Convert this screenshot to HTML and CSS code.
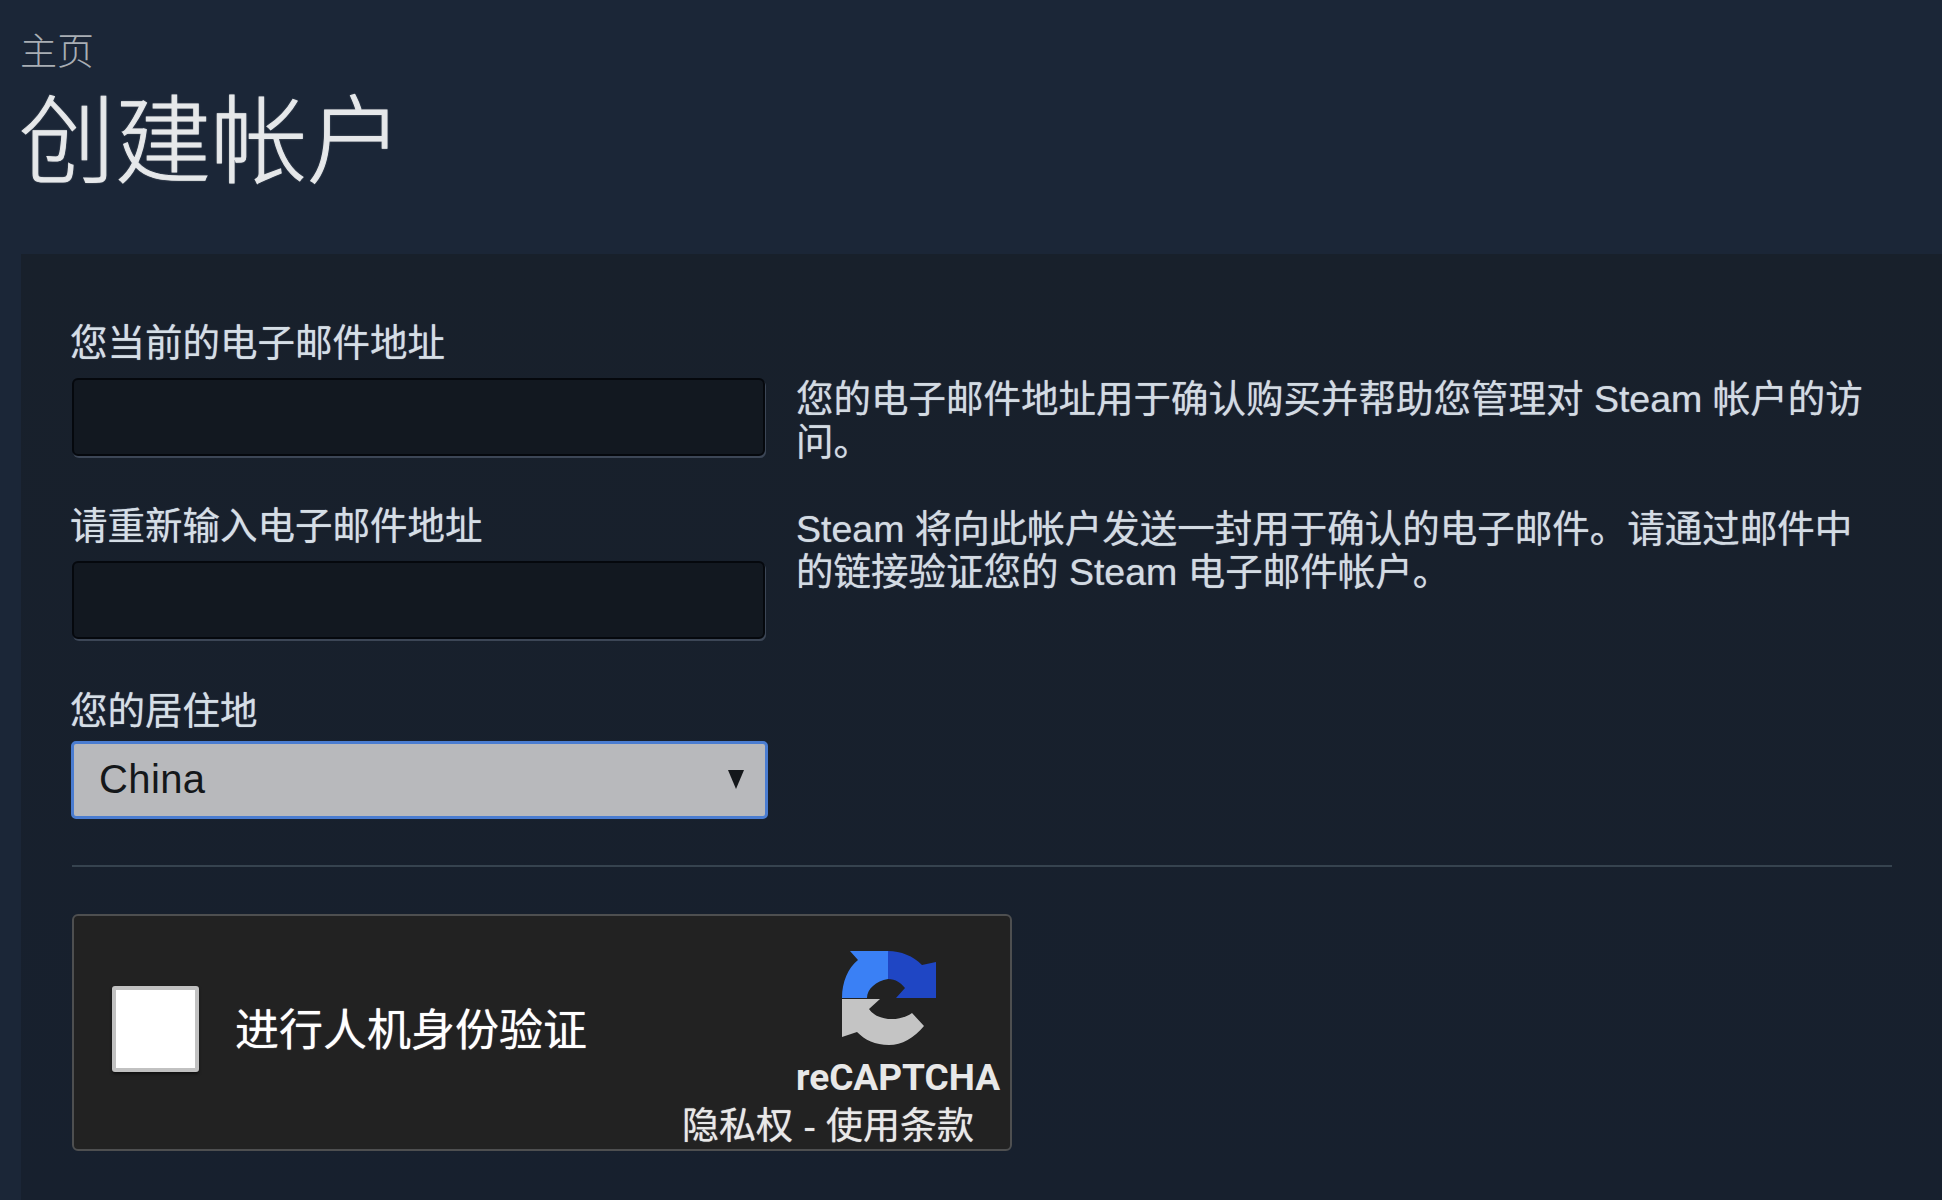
FILE: index.html
```html
<!DOCTYPE html>
<html lang="zh-CN">
<head>
    <meta charset="UTF-8">
    <meta name="viewport" content="width=device-width, initial-scale=1.0">
    <title>创建帐户</title>
    <link rel="stylesheet" href="styles.css">
</head>
<body>
    <div class="page-header">
        <div class="breadcrumb">主页</div>
        <h1>创建帐户</h1>
    </div>
    <div class="panel">
        <div class="form-top">
            <div class="fields">
                <label class="field-label">您当前的电子邮件地址</label>
                <input class="text-input" type="text">
                <label class="field-label">请重新输入电子邮件地址</label>
                <input class="text-input" type="text">
                <label class="field-label">您的居住地</label>
                <div class="select-box">
                    <span>China</span>
                    <span class="select-arrow"></span>
                </div>
            </div>
            <div class="hints">
                <p>您的电子邮件地址用于确认购买并帮助您管理对 Steam 帐户的访问。</p>
                <p>Steam 将向此帐户发送一封用于确认的电子邮件。请通过邮件中的链接验证您的 Steam 电子邮件帐户。</p>
            </div>
        </div>
        <div class="divider"></div>
        <div class="captcha">
            <div class="captcha-check"></div>
            <div class="captcha-label">进行人机身份验证</div>
            <div class="captcha-brand">
                <svg class="captcha-logo" viewBox="0 0 94 94" width="94" height="94">
                    <path fill="#3a80f5" d="M46 0H8L16 9C6 17 0 31 0 47H25C25 38 34 30 46 28Z"/>
                    <path fill="#1f46c4" d="M46 0C59 0 71 5 80 14L94 11V47H54L63 37C59 32 54 28 46 28Z"/>
                    <path fill="#c4c4c4" d="M0 48H38L27 58C34 69 56 72 70 62L82 75C72 87 60 94 47 94C33 94 23 89 15 81L0 86Z"/>
                </svg>
                <div class="captcha-name">reCAPTCHA</div>
                <div class="captcha-links">隐私权 - 使用条款</div>
            </div>
        </div>
    </div>
</body>
</html>
```

FILE: styles.css
```css
body {
    margin: 0;
    height: 1200px;
    overflow: hidden;
    background: #1b2637;
    font-family: "Liberation Sans", "Noto Sans CJK SC", sans-serif;
    color: #c6d4df;
}

.page-header {
    height: 254px;
    padding: 31px 0 0 19px;
    box-sizing: border-box;
}

.breadcrumb {
    padding-left: 1px;
    font-size: 37px;
    line-height: 44px;
    font-weight: 300;
    color: #a9aeb4;
}

h1 {
    margin: 7px 0 0;
    font-size: 96px;
    line-height: 120px;
    font-weight: 300;
    color: #e6e8ea;
    -webkit-text-stroke: 1px #e6e8ea;
    text-shadow: 0 0 2px rgba(230, 232, 234, 0.7);
}

.panel {
    margin-left: 21px;
    height: 946px;
    padding: 67px 50px 0 51px;
    box-sizing: border-box;
    background: linear-gradient(#18202b, #17202e);
}

.form-top {
    display: flex;
    gap: 31px;
}

.fields {
    width: 693px;
    flex-shrink: 0;
}

.field-label {
    display: block;
    margin-left: -2px;
    font-size: 37.5px;
    line-height: 44px;
    color: #d5dee6;
    text-shadow: 0 0 1px rgba(213, 222, 230, 0.7);
}

.text-input {
    display: block;
    width: 100%;
    height: 78px;
    margin: 13px 0 48px;
    box-sizing: border-box;
    background: #121820;
    border: 2px solid #05080d;
    border-radius: 6px;
    box-shadow: 1px 2px 0 #3c4656;
}

.text-input:last-of-type {
    margin-bottom: 50px;
}

.select-box {
    display: flex;
    align-items: center;
    justify-content: space-between;
    width: 697px;
    height: 78px;
    margin: 8px 0 0 -1px;
    padding: 0 21px 2px 25px;
    box-sizing: border-box;
    background: #b8b9bc;
    border: 3px solid #4a7cd0;
    border-radius: 5px;
    font-size: 40px;
    letter-spacing: 0.4px;
    color: #14171a;
}

.select-arrow {
    width: 0;
    height: 0;
    border-left: 8px solid transparent;
    border-right: 8px solid transparent;
    border-top: 19px solid #14171a;
}

.hints {
    flex: 1;
    padding: 57px 20px 0 0;
}

.hints p {
    margin: 0 0 44px;
    font-size: 37.5px;
    line-height: 43px;
    color: #d3dbe3;
    text-shadow: 0 0 1px rgba(211, 219, 227, 0.7);
}

.divider {
    height: 2px;
    margin-top: 46px;
    background: #36434f;
}

.captcha {
    position: relative;
    width: 940px;
    height: 237px;
    margin-top: 47px;
    box-sizing: border-box;
    display: flex;
    align-items: center;
    padding-left: 38px;
    background: #222222;
    border: 2px solid #4e4f50;
    border-radius: 6px;
}

.captcha-check {
    width: 87px;
    height: 86px;
    margin-top: -8px;
    box-sizing: border-box;
    background: #ffffff;
    border: 4px solid #c1c1c1;
    border-radius: 3px;
    box-shadow: 0 2px 3px rgba(0, 0, 0, 0.5);
}

.captcha-label {
    margin-left: 36px;
    margin-top: -12px;
    font-size: 44px;
    color: #ffffff;
    text-shadow: 0 0 1px rgba(255, 255, 255, 0.8);
}

.captcha-brand {
    position: absolute;
    top: 35px;
    right: 10px;
    width: 340px;
    display: flex;
    flex-direction: column;
    align-items: flex-end;
    color: #e8e8e8;
}

.captcha-logo {
    display: block;
    margin-right: 64px;
}

.captcha-name {
    font-family: Roboto, "Liberation Sans", sans-serif;
    font-size: 37px;
    line-height: 44px;
    font-weight: 700;
    margin-top: 11px;
}

.captcha-links {
    font-size: 37px;
    line-height: 44px;
    margin-top: 5px;
    margin-right: 26px;
    text-shadow: 0 0 1px rgba(232, 232, 232, 0.8);
}
```
